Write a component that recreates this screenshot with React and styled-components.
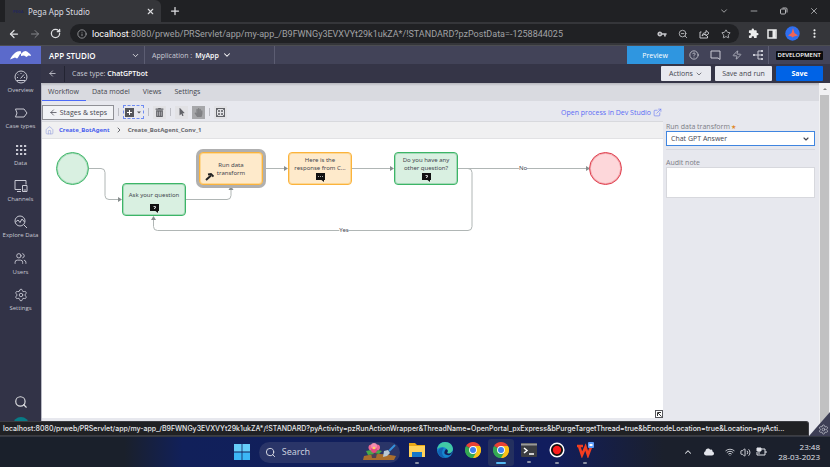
import React from "react";
import styled, { createGlobalStyle } from "styled-components";
import {
  ArrowLeft,
  ArrowRight,
  ChevronDown,
  ChevronRight,
  ChevronUp,
  CircleHelp,
  ExternalLink,
  House,
  Info,
  Minus,
  Plus,
  RotateCw,
  Search,
  Settings,
  Star,
  Users,
  Volume2,
  Wifi,
  X,
  Zap,
  ZoomOut
} from "lucide-react";
import { MdExtension, MdMoreVert, MdVpnKey } from "react-icons/md";
import { FaCloud, FaMousePointer, FaHandPaper, FaTrashAlt } from "react-icons/fa";

const ui = `"Open Sans", "Noto Sans", sans-serif`;
const system = `"Noto Sans", "Open Sans", sans-serif`;

const navItems = [
  { label: "Overview", icon: "gauge" },
  { label: "Case types", icon: "case" },
  { label: "Data", icon: "grid" },
  { label: "Channels", icon: "channels" },
  { label: "Explore Data", icon: "explore" },
  { label: "Users", icon: "users" },
  { label: "Settings", icon: "settings" }
];

const tabs = ["Workflow", "Data model", "Views", "Settings"];

const steps = [
  { id: "ask", x: 80, y: 44, tone: "green", text: "Ask your question", icon: "?" },
  { id: "run", x: 157, y: 13, tone: "orange", text: "Run data transform", selected: true },
  { id: "here", x: 246, y: 13, tone: "orange", text: "Here is the response from C...", icon: "…" },
  { id: "more", x: 352, y: 13, tone: "green", text: "Do you have any other question?", icon: "?" }
];

const NavIcon = ({ name }) => {
  if (name === "users") return <Users size={13} strokeWidth={1.7} />;
  if (name === "settings") return <Settings size={14} strokeWidth={1.5} />;

  return (
    <svg width="14" height="14" viewBox="0 0 14 14" fill="none" stroke="currentColor">
      {name === "gauge" && (
        <>
          <circle cx="7" cy="7" r="6" />
          <path d="M3 10.500h8M3 7.500h1M4 4.500l.7.7M7 3v1M11 7.500h-1M6.500 8.500L10 4.500" />
        </>
      )}
      {name === "case" && <path d="M1.500 3h8.500l3 4-3 4H1.500l1.500-4z" />}
      {name === "grid" && (
        <path d="M2 3h2.200M6 3h2.200M10 3h2.200M2 7h2.200M6 7h2.200M10 7h2.200M2 11h2.200M6 11h2.200M10 11h2.200" strokeWidth="2" />
      )}
      {name === "channels" && <path d="M7 10.500H1v-9h11v4M3 12.500h4M8.500 6.500h4.500v6H8.500zM9.500 11h2.500" />}
      {name === "explore" && (
        <>
          <circle cx="6" cy="6" r="5" />
          <path d="M9.700 9.700L13 13M1.500 7l2.500-2 2 2.500L8 4l2.500 3" />
        </>
      )}
    </svg>
  );
};

const ChromeLogo = () => (
  <svg width="16" height="16" viewBox="0 0 16 16">
    <path d="M8 8L1.100 4a8 8 0 0 1 13.800 0z" fill="#e94235" />
    <path d="M8 8l6.900-4A8 8 0 0 1 8 16z" fill="#fbc116" />
    <path d="M8 8v8A8 8 0 0 1 1.100 4z" fill="#34a853" />
    <path d="M8 4h6.900A8 8 0 0 1 8 16l3.500-6z" fill="#fbc116" />
    <path d="M4.500 10L1.100 4a8 8 0 0 0 6.900 12l3.500-6z" fill="#34a853" />
    <circle cx="8" cy="8" r="3.900" fill="#fff" />
    <circle cx="8" cy="8" r="3" fill="#3d7ff2" />
  </svg>
);

const BrowserChrome = () => (
  <header>
    <TabStrip>
      <BrowserTab>
        <Favicon>PEGA</Favicon>
        <TabTitle>Pega App Studio</TabTitle>
        <PlainButton aria-label="Close tab"><X size={9} strokeWidth={3} /></PlainButton>
      </BrowserTab>
      <PlainButton aria-label="New tab"><Plus size={12} strokeWidth={2.500} /></PlainButton>
      <WindowButtons>
        <PlainButton aria-label="Search tabs"><ChevronDown size={10} /></PlainButton>
        <PlainButton aria-label="Minimise"><Minus size={10} /></PlainButton>
        <PlainButton aria-label="Restore">
          <svg width="8" height="8" viewBox="0 0 8 8" fill="none" stroke="currentColor">
            <rect x="0.500" y="2" width="5" height="5" rx="1" />
            <path d="M2.500 1h3.500q1 0 1 1v3.500" />
          </svg>
        </PlainButton>
        <PlainButton aria-label="Close"><X size={10} /></PlainButton>
      </WindowButtons>
    </TabStrip>
    <AddressRow>
      <PlainButton aria-label="Back"><ArrowLeft size={12} strokeWidth={2.500} /></PlainButton>
      <PlainButton aria-label="Forward" $dim><ArrowRight size={12} /></PlainButton>
      <PlainButton aria-label="Reload"><RotateCw size={11} strokeWidth={2.800} /></PlainButton>
      <Omnibox>
        <Info size={10} />
        <Url>
          <b>localhost</b>:8080/prweb/PRServlet/app/my-app_/B9FWNGy3EVXVYt29k1ukZA*/!STANDARD?pzPostData=-1258844025
        </Url>
        <OmniIcons>
          <MdVpnKey size={10} />
          <ZoomOut size={10} />
          <svg width="11" height="10" viewBox="0 0 11 10" fill="none" stroke="currentColor">
            <path d="M2.500 3H1v6h7.500V7M3 7q.5-3.500 4-3.500V1.500L10 4.200 7 7V5.200Q4.500 5.200 3 7z" />
          </svg>
          <Star size={10} />
        </OmniIcons>
      </Omnibox>
      <BrowserTools>
        <MdExtension size={11} />
        <svg width="10" height="10" viewBox="0 0 10 10" fill="none" stroke="currentColor" strokeWidth="1.500">
          <rect x="1" y="1" width="8" height="8" />
          <path d="M7 1v8" strokeWidth="3" />
        </svg>
        <svg width="15" height="15" viewBox="0 0 15 15">
          <circle cx="7.500" cy="7.500" r="7.200" fill="#2f6ff0" />
          <path d="M8 2l1.500 5 3.500 2.500-4 1-1.500 1-1-1L3 9.500 6.500 7z" fill="#f06458" />
        </svg>
        <MdMoreVert size={13} />
      </BrowserTools>
    </AddressRow>
  </header>
);

const Sidebar = () => (
  <SideNav>
    <Logo href="#" aria-label="Home">
      <svg width="22" height="10" viewBox="0 0 22 10" fill="#fff">
        <path d="M0 9.500C3 4 6 1 10.500 1l1 2.500C9 4 9 7 7 8.500L5 7.500z" />
        <path d="M11 4q3-4 6-2.500l1.500 1.200Q21 4 21 6l-2.500-.5L16.500 7 14 5.500 11 6z" />
      </svg>
    </Logo>
    <NavList>
      {navItems.map(item => (
        <NavLink href="#" key={item.label}>
          <NavIcon name={item.icon} />
          <span>{item.label}</span>
        </NavLink>
      ))}
    </NavList>
    <SideFooter>
      <PlainButton aria-label="Search"><Search size={14} /></PlainButton>
      <Avatar />
    </SideFooter>
  </SideNav>
);

const StudioHeader = () => (
  <header>
    <TopBar>
      <StudioButton>APP STUDIO<ChevronDown size={9} /></StudioButton>
      <ApplicationButton>
        Application : <strong>MyApp</strong><ChevronDown size={10} strokeWidth={2.500} color="#fff" />
      </ApplicationButton>
      <Preview>Preview</Preview>
      <TopIcons>
        <CircleHelp size={10} />
        <svg width="11" height="10" viewBox="0 0 11 10" fill="none" stroke="currentColor">
          <path d="M1 1h9v8.500L8 8H1z" />
        </svg>
        <Zap size={10} strokeWidth={1.800} />
        <svg width="10" height="10" viewBox="0 0 10 10" fill="none" stroke="currentColor">
          <path d="M1 5h4M9 1H5v8h4M5 5h4" />
          <path d="M0 5h2M8 1h2M8 5h2M8 9h2" strokeWidth="2" />
        </svg>
      </TopIcons>
      <EnvironmentCell><Environment>DEVELOPMENT</Environment></EnvironmentCell>
    </TopBar>
    <CaseBar>
      <BackButton aria-label="Back"><ArrowLeft size={9} /></BackButton>
      <CaseTitle>Case type: <strong>ChatGPTbot</strong></CaseTitle>
      <CaseButton>Actions <ChevronDown size={8} /></CaseButton>
      <CaseButton $wide>Save and run</CaseButton>
      <CaseButton $primary>Save</CaseButton>
    </CaseBar>
  </header>
);

const Toolbar = () => (
  <Tools>
    <StagesButton><ArrowLeft size={9} />Stages &amp; steps</StagesButton>
    <Rule />
    <AddButton aria-label="Add shape">
      <svg width="17" height="9" viewBox="0 0 17 9" fill="#55565b">
        <path d="M0 0h9v9H0z" />
        <path d="M2 4.500h5M4.500 2v5" stroke="#fff" />
        <path d="M12 3.500h4l-2 2z" />
      </svg>
    </AddButton>
    <Rule />
    <ToolButton aria-label="Delete"><FaTrashAlt size={9} /></ToolButton>
    <Rule />
    <ToolButton aria-label="Select"><FaMousePointer size={8} /></ToolButton>
    <ToolButton aria-label="Pan" $active><FaHandPaper size={9} /></ToolButton>
    <Rule />
    <ToolButton aria-label="Fit to screen">
      <svg width="9" height="9" viewBox="0 0 9 9" fill="none" stroke="currentColor">
        <rect x="0.500" y="0.500" width="8" height="8" />
        <path d="M1 1l2.500 2.500M8 1L5.500 3.500M1 8l2.500-2.500M8 8L5.500 5.500M2 3.500h1.500V2M7 3.500H5.500V2M2 5.500h1.500V7M7 5.500H5.500V7" strokeWidth="0.800" />
      </svg>
    </ToolButton>
    <DevLink href="#">Open process in Dev Studio <ExternalLink size={9} strokeWidth={1.500} /></DevLink>
  </Tools>
);

const Workflow = () => (
  <Canvas>
    <Edges width="580" height="110" fill="none" stroke="#b0b6b5">
      <path d="M46 29.500h13q4 0 4 4v23q0 4 4 4h10" />
      <path d="M143 60.500h42q4 0 4-4V49" />
      <path d="M222 29.500h20M309 29.500h39M415 29.500h129" />
      <path d="M415 29.500h11q4 0 4 4v54q0 4-4 4H115.500q-4 0-4-4V80" />
      <g fill="#888e8e" stroke="none">
        <path d="M76 58l4 2.500-4 2.500zM186.500 51l2.500-4 2.500 4zM242 27l4 2.500-4 2.500zM348 27l4 2.500-4 2.500zM544 27l4 2.500-4 2.500zM109 81l2.500-4 2.500 4z" />
      </g>
    </Edges>
    <EndPoint $x={14} $tone="green" />
    {steps.map(step => (
      <Step key={step.id} $x={step.x} $y={step.y} $tone={step.tone} $selected={step.selected}>
        <StepText>{step.text}</StepText>
        {step.icon && (
          <svg width="9" height="9" viewBox="0 0 9 9">
            <path d="M0 0h9v7H8v2L5.500 7H0z" fill="#111" />
            {step.icon === "?" ? (
              <path d="M3.500 2.500h2v1.500h-1v1" stroke="#ccc" fill="none" />
            ) : (
              <path d="M2 3.500h1M4 3.500h1M6 3.500h1" stroke="#aaa" />
            )}
          </svg>
        )}
        {step.selected && (
          <Hammer width="9" height="8" viewBox="0 0 9 8" fill="none" stroke="#222">
            <path d="M1 7l5-4.500" strokeWidth="2" />
            <path d="M3 1.500l3-.5 2.500 2.500" strokeWidth="1.800" />
          </Hammer>
        )}
      </Step>
    ))}
    <EndPoint $x={547} $tone="red" />
    <EdgeLabel $x={481} $y={29}>No</EdgeLabel>
    <EdgeLabel $x={302} $y={91}>Yes</EdgeLabel>
    <Expand aria-label="Expand overview">
      <svg width="5" height="5" viewBox="0 0 5 5" fill="none" stroke="#333">
        <path d="M.5 4V.5H4M1 1l3.500 3.500" />
      </svg>
    </Expand>
  </Canvas>
);

const Properties = () => (
  <Panel>
    <FieldLabel htmlFor="transform">Run data transform<Required>★</Required></FieldLabel>
    <SelectWrap>
      <Select id="transform" defaultValue="Chat GPT Answer">
        <option>Chat GPT Answer</option>
      </Select>
      <ChevronDown size={8} strokeWidth={3.500} />
    </SelectWrap>
    <Divider />
    <FieldLabel htmlFor="note">Audit note</FieldLabel>
    <Note id="note" />
  </Panel>
);

const Taskbar = () => (
  <TaskbarRow>
    <TaskApps>
      <PlainButton aria-label="Start">
        <svg width="16" height="16" viewBox="0 0 16 16" fill="#3cb6f5">
          <path d="M0 0h7.600v7.600H0zM8.400 0H16v7.600H8.400z" fill="#66cdf8" />
          <path d="M0 8.400h7.600V16H0zM8.400 8.400H16V16H8.400z" />
        </svg>
      </PlainButton>
      <SearchBox>
        <Search size={11} />
        <SearchInput aria-label="Search" placeholder="Search" />
        <svg width="36" height="18" viewBox="0 0 36 18">
          <path d="M2 13q15-4 32 0l-2 4H1z" fill="#a96e2d" />
          <path d="M9 10h6l-1 5h-4z" fill="#4d3f59" />
          <path d="M4 8l5-1 3 4-6 1zM13 10l3-3 4 1-3 3z" fill="#49a847" />
          <circle cx="9.500" cy="4.500" r="3" fill="#ee6796" />
          <circle cx="15" cy="4.500" r="3" fill="#ee6796" />
          <circle cx="12" cy="7" r="3" fill="#e34b80" />
          <circle cx="12" cy="3" r="3" fill="#f58caf" />
          <circle cx="12" cy="5" r="1.300" fill="#ffd35e" />
          <path d="M33 2l-6 6" stroke="#3490dc" strokeWidth="2" />
          <path d="M22 8l4-1 2 3-3 3-4 1z" fill="#b9c9d5" />
        </svg>
      </SearchBox>
      <TaskButton aria-label="File Explorer" $running>
        <svg width="16" height="16" viewBox="0 0 16 16">
          <path d="M0 1h6l2 2h8v12H0z" fill="#e9a716" />
          <path d="M0 4h16v11H0z" fill="#ffd25a" />
          <path d="M3 10h10v5H3z" fill="#1677c9" />
        </svg>
      </TaskButton>
      <TaskButton aria-label="Edge">
        <svg width="16" height="16" viewBox="0 0 16 16">
          <circle cx="8" cy="8" r="8" fill="#1687cf" />
          <path d="M0 7Q2 0 8 0q7 0 8 7-1 5-6 4 2-2 0-4-4-4-10 0z" fill="#41c8a5" />
          <path d="M6 7q-3 6 3 9-8 0-8-7 2-4 6-3z" fill="#1262b3" />
          <path d="M9 7q3 1 1 4 3 2 6-2-2 5-6 4-5-1-1-6z" fill="#141f57" />
        </svg>
      </TaskButton>
      <TaskButton aria-label="Chrome"><ChromeLogo /></TaskButton>
      <TaskButton aria-label="Chrome window" $running $active><ChromeLogo /></TaskButton>
      <TaskButton aria-label="Terminal" $running>
        <svg width="16" height="14" viewBox="0 0 16 14" fill="none" stroke="#fff">
          <rect width="16" height="14" rx="1" fill="#3c3d42" stroke="none" />
          <path d="M0 1.500h16" stroke="#999" strokeWidth="2" />
          <path d="M3 5l3 2.500L3 10M8 11h5" strokeWidth="1.500" />
        </svg>
      </TaskButton>
      <TaskButton aria-label="Recorder" $running>
        <svg width="16" height="16" viewBox="0 0 16 16">
          <circle cx="8" cy="8" r="6.800" fill="#111" stroke="#fff" strokeWidth="1.500" />
          <circle cx="8" cy="8" r="4.200" fill="#fb1e1e" />
        </svg>
      </TaskButton>
      <TaskButton aria-label="WPS Office" $running>
        <svg width="18" height="16" viewBox="0 0 18 16" fill="none">
          <path d="M1 4h6M3 4l3 9 3.500-8L12 13l3-8" stroke="#f33e20" strokeWidth="2.600" />
          <rect x="12" y="0" width="6" height="6" rx="1" fill="#5d9dfa" />
          <path d="M13.500 2h3v2h-3z" fill="#fff" />
        </svg>
      </TaskButton>
    </TaskApps>
    <Tray>
      <ChevronUp size={10} strokeWidth={2.500} />
      <FaCloud size={10} />
      <Indicators>
        <Wifi size={10} />
        <Volume2 size={11} />
        <svg width="11" height="10" viewBox="0 0 11 10" fill="none" stroke="currentColor">
          <path d="M4 2h5v6H1V5M10 4v2" />
          <path d="M1 1h4v3H1zM3 4v3" fill="currentColor" />
        </svg>
      </Indicators>
      <Clock><time>23:48</time><time>28-03-2023</time></Clock>
    </Tray>
  </TaskbarRow>
);

const App = () => (
  <Screen>
    <GlobalStyle />
    <BrowserChrome />
    <Page>
      <Sidebar />
      <Main>
        <StudioHeader />
        <Body>
          <Content>
            <TabList>
              {tabs.map((tab, i) => (
                <Tab key={tab} $active={i === 0}>{tab}</Tab>
              ))}
            </TabList>
            <Editor>
              <Process>
                <Toolbar />
                <Breadcrumb>
                  <House size={9} strokeWidth={1.500} color="#8e9bdc" />
                  <a href="#">Create_BotAgent</a>
                  <ChevronRight size={8} strokeWidth={3} />
                  <span>Create_BotAgent_Conv_1</span>
                </Breadcrumb>
                <Workflow />
              </Process>
              <Properties />
            </Editor>
          </Content>
          <Scrollbar>
            <svg width="10" height="12" viewBox="0 0 10 12"><path d="M3 7l2-2 2 2z" fill="#888" /></svg>
            <Thumb />
          </Scrollbar>
        </Body>
      </Main>
      <StatusBar>
        localhost:8080/prweb/PRServlet/app/my-app_/B9FWNGy3EVXVYt29k1ukZA*/!STANDARD?pyActivity=pzRunActionWrapper&amp;ThreadName=OpenPortal_pxExpress&amp;bPurgeTargetThread=true&amp;bEncodeLocation=true&amp;Location=pyActi...
      </StatusBar>
      <Corner aria-label="Runtime tools"><Settings size={11} strokeWidth={1.500} /></Corner>
    </Page>
    <Taskbar />
  </Screen>
);

const GlobalStyle = createGlobalStyle`
  * {
    box-sizing: border-box;
  }

  body {
    margin: 0;
    font-family: ${ui};
    font-size: 7px;
    line-height: 9px;
    color: #45464f;
  }

  button, input, select, textarea {
    font: inherit;
    color: inherit;
    border: 0;
    padding: 0;
    margin: 0;
    background: none;
    border-radius: 0;
  }

  a {
    text-decoration: none;
  }

  svg {
    display: block;
    flex: none;
  }
`;

const Screen = styled.div`
  display: flex;
  flex-direction: column;
  height: 100vh;
  overflow: hidden;
`;

const PlainButton = styled.button`
  display: flex;
  align-items: center;
  justify-content: center;
  color: ${({ $dim }) => ($dim ? "#85868a" : "#dddee1")};
`;

const TabStrip = styled.div`
  display: flex;
  align-items: center;
  gap: 8px;
  height: 22px;
  padding-left: 5px;
  background: #202124;
`;

const BrowserTab = styled.div`
  display: flex;
  align-items: center;
  width: 156px;
  height: 22px;
  padding: 0 6px 0 8px;
  border-radius: 0 6px 0 0;
  background: #35363a;
`;

const Favicon = styled.span`
  width: 15px;
  font-size: 4px;
  font-weight: 700;
  color: #23275a;
`;

const TabTitle = styled.span`
  flex: 1;
  font-family: ${system};
  font-size: 8px;
  color: #dcdde0;
`;

const WindowButtons = styled.div`
  display: flex;
  gap: 20px;
  margin-left: auto;
  padding-right: 11px;
  opacity: 0.8;

  button {
    width: 10px;
  }
`;

const AddressRow = styled.div`
  display: flex;
  align-items: center;
  gap: 9px;
  height: 24px;
  padding: 0 9px 0 8px;
  border-bottom: 1px solid #4c4d51;
  background: #35363a;
`;

const Omnibox = styled.div`
  display: flex;
  flex: 1;
  align-items: center;
  gap: 5px;
  height: 19px;
  padding: 0 8px 0 7px;
  border-radius: 10px;
  background: #202124;
  color: #a0a1a5;
`;

const Url = styled.span`
  flex: 1;
  overflow: hidden;
  white-space: nowrap;
  font-family: Roboto, "Open Sans", sans-serif;
  font-size: 9px;
  line-height: 12px;

  b {
    font-weight: 400;
    color: #fff;
  }
`;

const OmniIcons = styled.div`
  display: flex;
  gap: 11px;
  color: #c5c6ca;
`;

const BrowserTools = styled.div`
  display: flex;
  align-items: center;
  gap: 8px;
  color: #eceded;
`;

const Page = styled.div`
  position: relative;
  display: flex;
  flex: 1;
  min-height: 0;
`;

const SideNav = styled.nav`
  display: flex;
  flex-direction: column;
  width: 41px;
  background: #323347;
`;

const Logo = styled.a`
  display: flex;
  align-items: center;
  justify-content: center;
  height: 18px;
  background: #5b6acb;
`;

const NavList = styled.div`
  display: flex;
  flex: 0 1 248px;
  flex-direction: column;
  justify-content: space-between;
  padding-top: 6px;
`;

const NavLink = styled.a`
  display: flex;
  flex-direction: column;
  align-items: center;
  justify-content: space-between;
  height: 24px;
  font-size: 6px;
  line-height: 8px;
  white-space: nowrap;
  color: #c8c9d3;
`;

const SideFooter = styled.div`
  display: flex;
  flex-direction: column;
  align-items: center;
  gap: 8px;
  height: 41px;
  margin-top: auto;
  overflow: hidden;
`;

const Avatar = styled.span`
  flex: none;
  width: 16px;
  height: 16px;
  border-radius: 50%;
  background: #087b86;
`;

const Main = styled.main`
  display: flex;
  flex: 1;
  flex-direction: column;
  min-width: 0;
`;

const TopBar = styled.div`
  display: flex;
  height: 18px;
  background: #424358;
  color: #c9cad4;

  strong {
    font-weight: 600;
    color: #fff;
  }
`;

const StudioButton = styled.button`
  display: flex;
  align-items: center;
  justify-content: space-between;
  width: 104px;
  padding: 0 4px 0 8px;
  border-right: 1px solid #5c5d72;
  font-size: 8px;
  font-weight: 600;
  color: #fff;
`;

const ApplicationButton = styled.button`
  display: flex;
  align-items: center;
  gap: 3px;
  width: 130px;
  padding-left: 7px;
  border-right: 1px solid #5c5d72;
`;

const Preview = styled.button`
  width: 57px;
  margin-left: auto;
  background: #2f96e0;
  color: #fff;
`;

const TopIcons = styled.div`
  display: flex;
  align-items: center;
  gap: 11px;
  padding: 0 5px;
`;

const EnvironmentCell = styled.div`
  display: flex;
  align-items: center;
  padding: 0 7px;
  border-left: 1px solid #5c5d72;
`;

const Environment = styled.span`
  padding: 0 2px;
  border-radius: 1px;
  background: #0b0b0e;
  font-size: 6px;
  font-weight: 600;
  color: #fff;
`;

const CaseBar = styled.div`
  display: flex;
  align-items: center;
  gap: 4px;
  height: 19px;
  padding-right: 7px;
  background: #353547;
`;

const BackButton = styled.button`
  display: flex;
  align-items: center;
  justify-content: center;
  width: 24px;
  height: 16px;
  border-right: 1px solid #232432;
  color: #d8d9e0;
`;

const CaseTitle = styled.h1`
  flex: 1;
  margin: 0;
  padding-left: 3px;
  font-size: 7px;
  font-weight: 400;
  color: #c9cad4;

  strong {
    font-weight: 600;
    color: #fff;
  }
`;

const CaseButton = styled.button`
  display: flex;
  align-items: center;
  justify-content: center;
  gap: 2px;
  width: ${({ $wide, $primary }) => ($wide ? "57px" : $primary ? "47px" : "50px")};
  height: 15px;
  border-radius: 1px;
  background: ${({ $primary }) => ($primary ? "#0063e6" : "#e8e9ef")};
  font-weight: ${({ $primary }) => ($primary ? 700 : 400)};
  color: ${({ $primary }) => ($primary ? "#fff" : "#45464f")};
`;

const Body = styled.div`
  display: flex;
  flex: 1;
  min-height: 0;
  border-left: 1px solid #b9bac4;
`;

const Content = styled.div`
  display: flex;
  flex: 1;
  flex-direction: column;
  min-width: 0;
  background: #e7e8ee;
`;

const TabList = styled.div`
  display: flex;
  height: 18px;
  background: linear-gradient(#b5b6bc, #d9dae0 3px);
`;

const Tab = styled.button`
  padding: 0 7px 0 6px;
  border-bottom: 1px solid ${({ $active }) => ($active ? "#4d6bfa" : "transparent")};
`;

const Editor = styled.div`
  display: flex;
  flex: 1;
  min-height: 0;
  padding-bottom: 18px;
`;

const Process = styled.section`
  display: flex;
  flex: 1;
  flex-direction: column;
  min-width: 0;
`;

const Tools = styled.div`
  display: flex;
  align-items: center;
  height: 21px;
  padding: 2px 1px 0 0;
  border-bottom: 1px solid #d8d9dd;
`;

const StagesButton = styled.button`
  display: flex;
  align-items: center;
  justify-content: center;
  gap: 2px;
  width: 72px;
  height: 15px;
  border: 1px solid #8f9096;
  background: #f2f3f6;
`;

const Rule = styled.span`
  width: 1px;
  height: 8px;
  margin: 0 4px;
  background: #bcbdc4;
`;

const AddButton = styled.button`
  display: flex;
  align-items: center;
  justify-content: center;
  width: 21px;
  height: 14px;
  border: 1px dashed #6f8cf2;
`;

const ToolButton = styled.button`
  display: flex;
  align-items: center;
  justify-content: center;
  width: 13px;
  height: 13px;
  background: ${({ $active }) => ($active ? "#a6a7aa" : "#e2e2e5")};
  color: ${({ $active }) => ($active ? "#808184" : "#626368")};

  & + & {
    margin-left: 4px;
  }
`;

const DevLink = styled.a`
  display: flex;
  align-items: center;
  gap: 2px;
  margin-left: auto;
  color: #5b6cf5;
`;

const Breadcrumb = styled.nav`
  display: flex;
  align-items: center;
  gap: 5px;
  height: 17px;
  padding-left: 3px;
  border-bottom: 1px solid #e2e2e4;
  background: #f0f0f1;
  font-family: "Noto Sans", "Open Sans", sans-serif;
  font-size: 6px;
  font-weight: 700;
  color: #68696f;

  a {
    color: #4a60ee;
  }
`;

const Canvas = styled.div`
  position: relative;
  flex: 1;
  overflow: hidden;
  background: #fff;
  font-family: "Noto Sans", "Open Sans", sans-serif;
  font-size: 6px;
  line-height: 8px;
`;

const Edges = styled.svg`
  position: absolute;
  top: 0;
  left: 0;
`;

const tones = {
  green: { line: "#3cb567", soft: "#a5dab8", fill: "#d9f0e1" },
  orange: { line: "#fbb33c", soft: "#fdd793", fill: "#feeacb" },
  red: { line: "#df3c4b", soft: "#f2a5ab", fill: "#fdd7da" }
};

const EndPoint = styled.div`
  position: absolute;
  left: ${({ $x }) => $x}px;
  top: 13px;
  width: 33px;
  height: 33px;
  border: 1px solid ${({ $tone }) => tones[$tone].line};
  border-radius: 50%;
  background: ${({ $tone }) => tones[$tone].fill};
  box-shadow: inset 0 0 0 1px ${({ $tone }) => tones[$tone].soft};
`;

const Step = styled.div`
  position: absolute;
  left: ${({ $x }) => $x}px;
  top: ${({ $y }) => $y}px;
  display: flex;
  flex-direction: column;
  align-items: center;
  width: 64px;
  height: 33px;
  padding: 2px ${({ $selected }) => ($selected ? 12 : 4)}px;
  border: 1px solid ${({ $tone }) => tones[$tone].line};
  border-radius: 4px;
  background: ${({ $tone }) => tones[$tone].fill};
  box-shadow: inset 0 0 0 1px ${({ $tone }) => tones[$tone].soft}${({ $selected }) => ($selected ? ", 0 0 0 3px #b0b0b0" : "")};
  text-align: center;
`;

const StepText = styled.span`
  display: flex;
  flex: 1;
  align-items: center;
`;

const Hammer = styled.svg`
  position: absolute;
  left: 5px;
  bottom: 3px;
`;

const EdgeLabel = styled.span`
  position: absolute;
  left: ${({ $x }) => $x}px;
  top: ${({ $y }) => $y}px;
  transform: translate(-50%, -50%);
  background: #fff;
`;

const Expand = styled.button`
  position: absolute;
  right: 0;
  bottom: 0;
  display: flex;
  align-items: center;
  justify-content: center;
  width: 8px;
  height: 8px;
  border: 1px solid #55565b;
`;

const Panel = styled.aside`
  display: flex;
  flex-direction: column;
  width: 156px;
  padding: 20px 4px 0 3px;
`;

const FieldLabel = styled.label`
  display: flex;
  align-items: center;
  height: 10px;
  color: #7c7d86;
`;

const Required = styled.span`
  margin-left: 1px;
  font-family: "DejaVu Sans", sans-serif;
  font-size: 6px;
  color: #e08a2c;
`;

const SelectWrap = styled.div`
  display: grid;
  grid-template-columns: 1fr 12px;
  align-items: center;
  height: 15px;
  border: 1px solid #3f85e0;
  background: #fff;
`;

const Select = styled.select`
  grid-area: 1 / 1 / 2 / 3;
  height: 13px;
  padding-left: 4px;
  appearance: none;
  outline: 0;

  & + svg {
    grid-area: 1 / 2;
    pointer-events: none;
  }
`;

const Divider = styled.hr`
  width: 100%;
  height: 1px;
  margin: 3px 0 7px;
  border: 0;
  background: #d7d8e0;
`;

const Note = styled.textarea`
  height: 31px;
  border: 1px solid #d7d8dd;
  background: #fff;
  resize: none;
`;

const Scrollbar = styled.div`
  display: flex;
  flex-direction: column;
  align-items: center;
  width: 11px;
  background: #f1f1f3;
`;

const Thumb = styled.span`
  flex: 1;
  width: 9px;
  background: #c1c1c2;
`;

const StatusBar = styled.output`
  position: absolute;
  left: 0;
  right: 21px;
  bottom: 0;
  height: 15px;
  padding: 0 3px;
  overflow: hidden;
  white-space: nowrap;
  border: 1px solid #3c3d42;
  border-left: 0;
  border-radius: 0 3px 0 0;
  background: #202124;
  font-family: Inter, "Open Sans", sans-serif;
  font-size: 7px;
  font-weight: 500;
  line-height: 13px;
  color: #e8e9ec;
`;

const Corner = styled.button`
  position: absolute;
  right: 0;
  bottom: 0;
  display: flex;
  align-items: flex-end;
  justify-content: flex-end;
  width: 21px;
  height: 24px;
  padding: 0 1px 1px 0;
  background: #3d3e55;
  clip-path: polygon(100% 0, 100% 100%, 0 100%);
  color: #c8c9d2;
`;

const TaskbarRow = styled.footer`
  display: flex;
  align-items: center;
  justify-content: flex-end;
  height: 31px;
  padding-right: 10px;
  border-top: 1px solid #343842;
  background: linear-gradient(90deg, #1a202b 15%, #11205a 22%, #111d5e 66%, #1b202c 80%);
  font-family: ${system};
  color: #e2e4ea;
`;

const TaskApps = styled.div`
  display: flex;
  align-items: center;
  margin-right: auto;
  padding-left: 28.5%;

  & > button:first-child {
    margin-right: 9px;
  }
`;

const SearchBox = styled.div`
  display: flex;
  align-items: center;
  gap: 6px;
  width: 141px;
  height: 21px;
  margin-right: 3px;
  padding: 0 2px 0 6px;
  border-radius: 11px;
  background: #2a3568;
`;

const SearchInput = styled.input`
  flex: 1;
  min-width: 0;
  font-size: 9px;
  line-height: 12px;

  &::placeholder {
    color: #c9cddd;
    opacity: 1;
  }
`;

const TaskButton = styled.button`
  display: grid;
  place-items: center;
  width: 26px;
  height: 27px;
  margin: 0 1px;
  padding-top: 2px;
  border-radius: 3px;
  background: ${({ $active }) => ($active ? "#24305f" : "transparent")};

  &::after {
    content: "";
    width: ${({ $active }) => ($active ? 10 : 4)}px;
    height: 2px;
    border-radius: 1px;
    background: ${({ $active, $running }) => ($active ? "#55b9f2" : $running ? "#8a90a5" : "transparent")};
  }
`;

const Tray = styled.div`
  display: flex;
  align-items: center;
  gap: 11px;
`;

const Indicators = styled.div`
  display: flex;
  align-items: center;
  gap: 5px;
`;

const Clock = styled.div`
  display: flex;
  flex-direction: column;
  align-items: flex-end;
  font-family: ${ui};
  font-size: 8px;
  line-height: 10px;
`;

export default App;
